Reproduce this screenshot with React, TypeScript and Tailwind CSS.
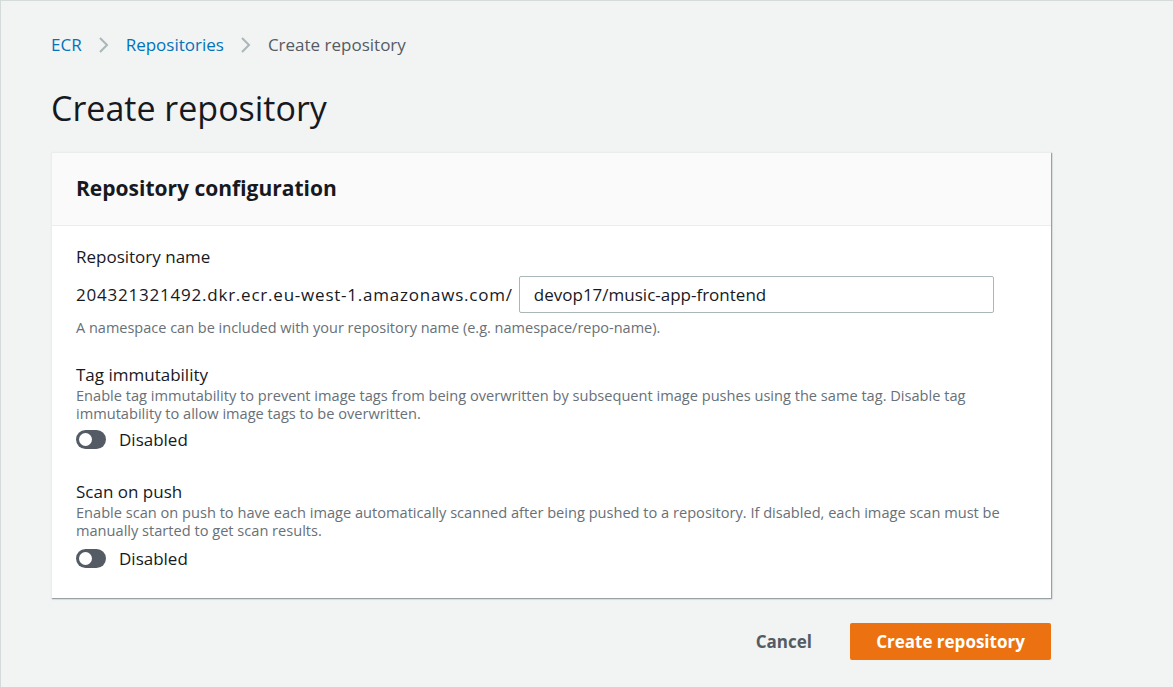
import React from "react";

function Chevron() {
  return (
    <svg width="12" height="18" viewBox="0 0 12 18" className="mx-[16px]">
      <path d="M2 2 L9 9 L2 16" fill="none" stroke="#aab7b8" strokeWidth="2" />
    </svg>
  );
}

function Toggle() {
  return (
    <div className="w-[30px] h-[19px] rounded-full bg-[#545b64] flex items-center px-[3px]">
      <div className="w-[13px] h-[13px] rounded-full bg-white" />
    </div>
  );
}

export default function App() {
  return (
    <div
      className="w-[1173px] h-[687px] bg-[#f2f3f3] border-l border-t border-[#d5dbdb] text-[#16191f]"
      style={{ fontFamily: '"Open Sans", "Noto Sans", Arial, sans-serif' }}
    >
      <div className="pl-[50px] w-[1050px]">
        <nav className="flex items-center pt-[31px] h-[57px] text-[17px]">
          <span className="text-[#0073bb]">ECR</span>
          <Chevron />
          <span className="text-[#0073bb]">Repositories</span>
          <Chevron />
          <span className="text-[#545b64]">Create repository</span>
        </nav>
        <h1 className="mt-[28px] text-[34px] leading-[44px] text-[#16191f]">Create repository</h1>
        <div className="mt-[22px] bg-white shadow-[1px_1px_1px_0_rgba(0,28,36,0.3),1px_1px_2px_0_rgba(0,28,36,0.15)] border-t border-l border-[#eaeded]">
          <div className="h-[73px] bg-[#fafafa] border-b border-[#eaeded] flex items-center px-[24px]">
            <h2 className="text-[21px] font-bold">Repository configuration</h2>
          </div>
          <div className="pl-[24px] pr-[10px] pt-[20px] pb-[27px]">
            <div className="text-[17px] leading-[22px]">Repository name</div>
            <div className="flex items-center mt-[8px]">
              <span className="text-[17px] tracking-[0.78px]">204321321492.dkr.ecr.eu-west-1.amazonaws.com/</span>
              <div className="ml-[6px] w-[475px] h-[37px] border border-[#aab7b8] rounded-[2px] flex items-center px-[14px] text-[17px]">
                devop17/music-app-frontend
              </div>
            </div>
            <div className="mt-[5px] text-[14.5px] leading-[20px] text-[#687078]">
              A namespace can be included with your repository name (e.g. namespace/repo-name).
            </div>

            <div className="mt-[26px] text-[17px] leading-[22px]">Tag immutability</div>
            <div className="text-[14.6px] leading-[18px] text-[#687078]">
              Enable tag immutability to prevent image tags from being overwritten by subsequent image pushes using the same tag. Disable tag immutability to allow image tags to be overwritten.
            </div>
            <div className="flex items-center gap-[13px] mt-[5px] text-[17px]">
              <Toggle />
              <span>Disabled</span>
            </div>

            <div className="mt-[28px] text-[17px] leading-[22px]">Scan on push</div>
            <div className="text-[14.6px] leading-[18px] text-[#687078]">
              Enable scan on push to have each image automatically scanned after being pushed to a repository. If disabled, each image scan must be manually started to get scan results.
            </div>
            <div className="flex items-center gap-[13px] mt-[7px] text-[17px]">
              <Toggle />
              <span>Disabled</span>
            </div>
          </div>
        </div>
        <div className="flex justify-end items-center mt-[25px] gap-[38px]">
          <button className="text-[17px] font-bold text-[#545b64]">Cancel</button>
          <button className="w-[201px] h-[37px] rounded-[2px] bg-[#ec7211] text-white text-[17px] font-bold">
            Create repository
          </button>
        </div>
      </div>
    </div>
  );
}
